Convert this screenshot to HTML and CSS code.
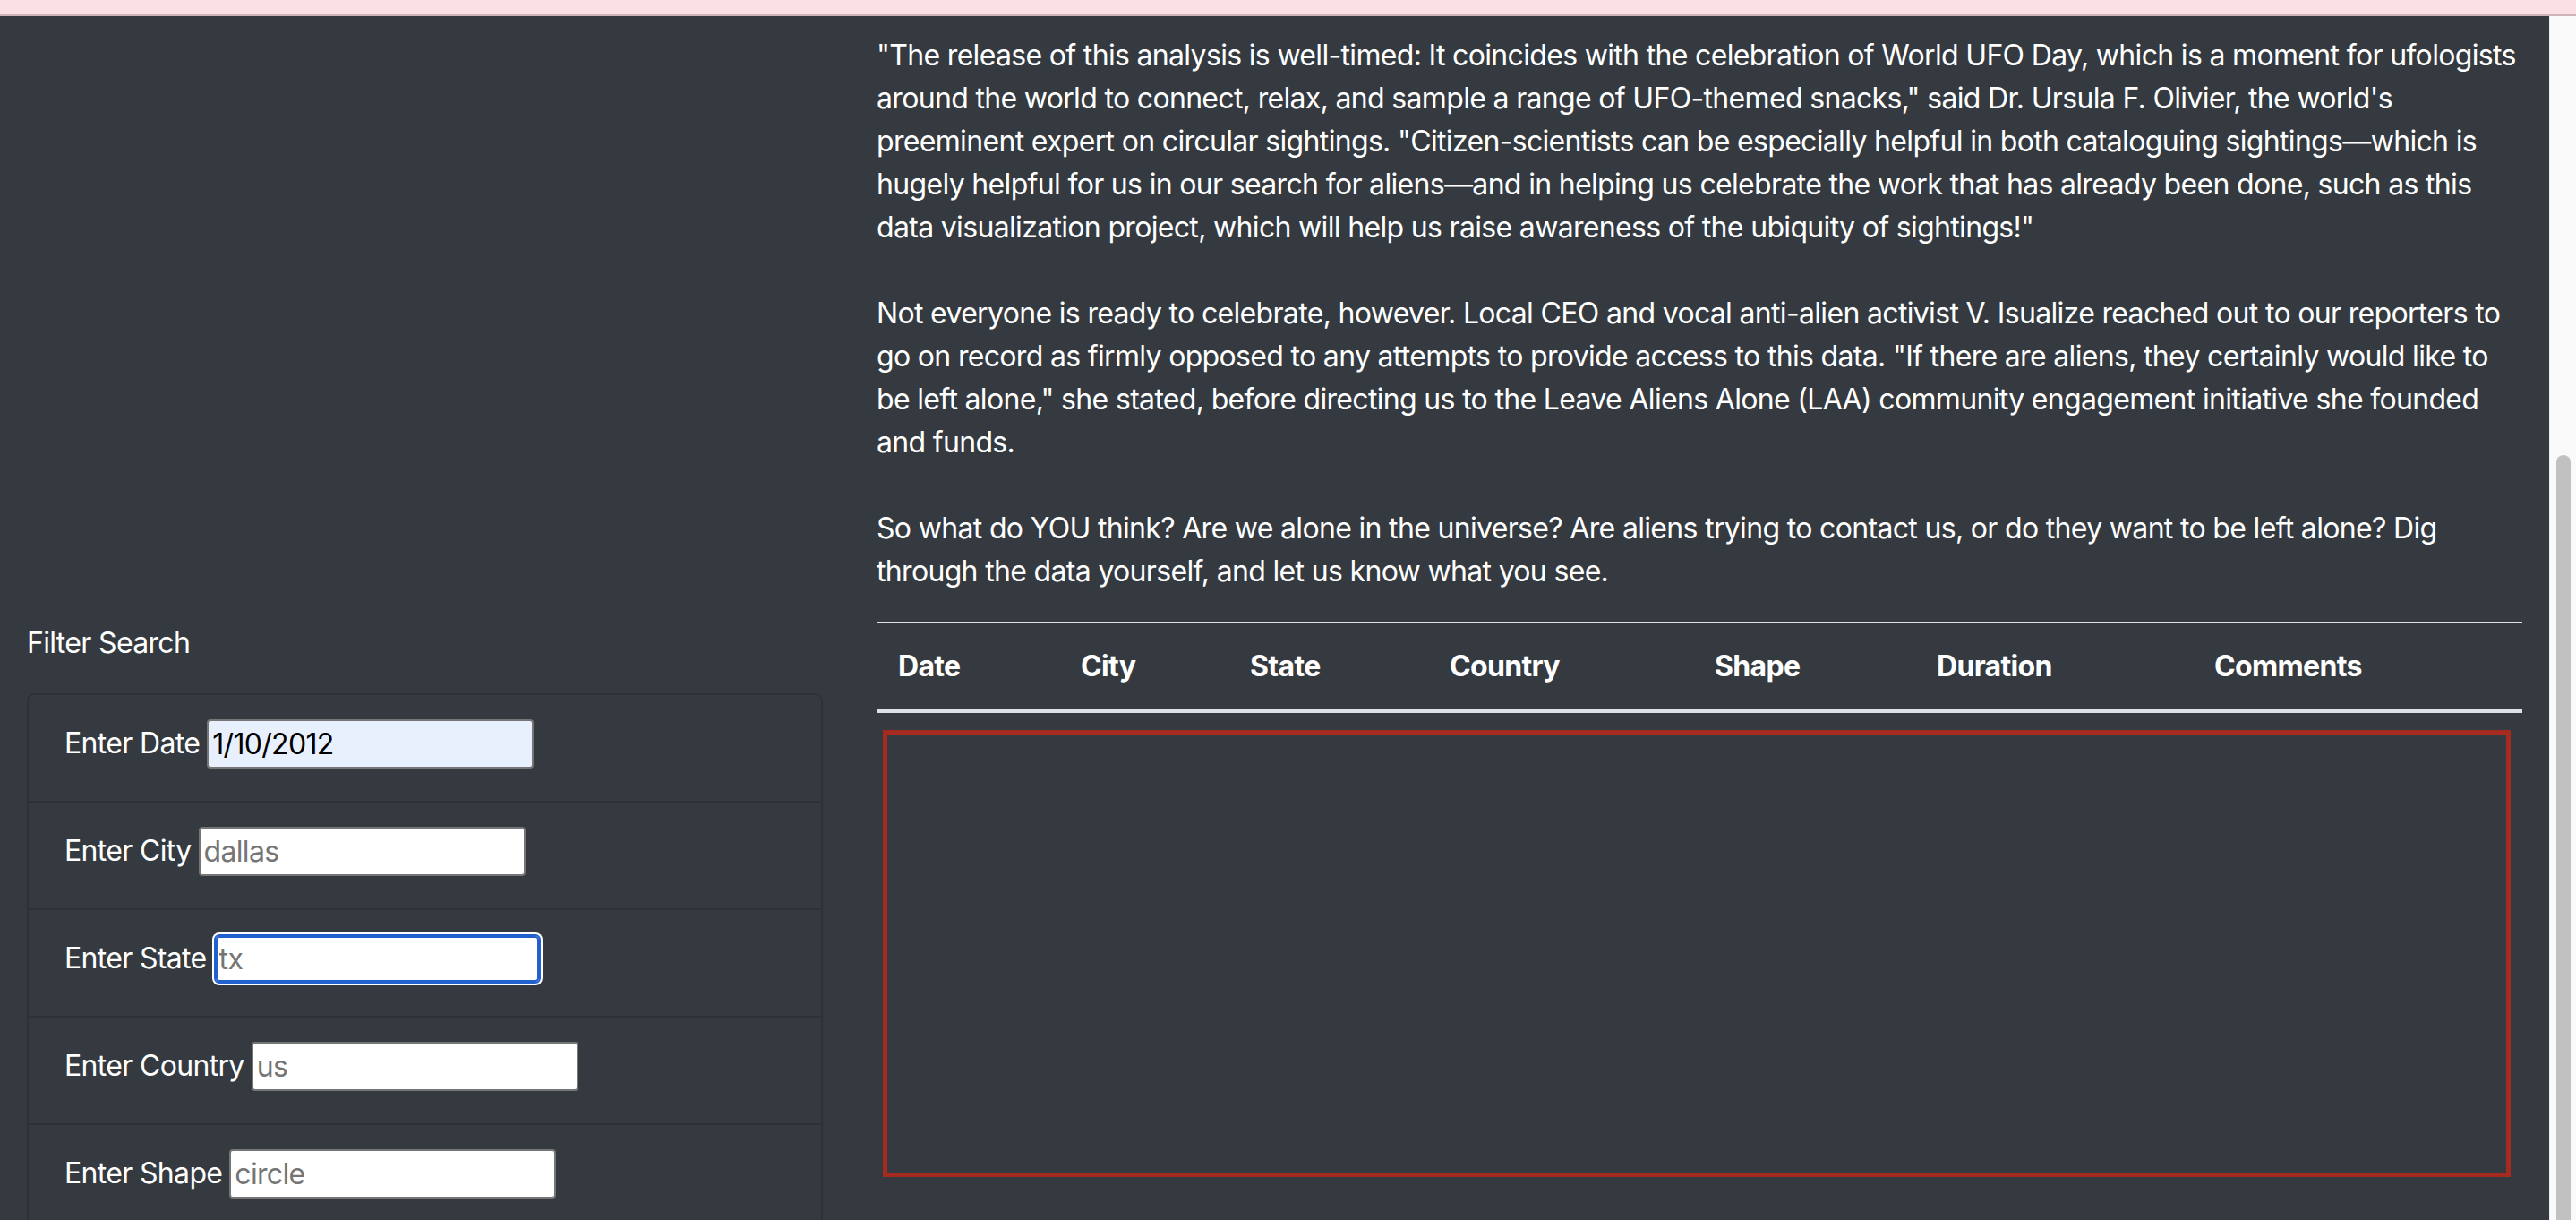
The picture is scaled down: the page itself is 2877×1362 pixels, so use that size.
FILE: index.html
```html
<!DOCTYPE html>
<html lang="en">
<head>
<meta charset="utf-8">
<title>UFO Sightings</title>
<link rel="stylesheet" href="styles.css">
</head>
<body>
<div class="topbar"></div>
<div class="window">
  <main class="page">
    <div class="layout">
      <div class="article">
        <p>"The release of this analysis is well-timed: It coincides with the celebration of World UFO Day, which is a moment for ufologists around the world to connect, relax, and sample a range of UFO-themed snacks," said Dr. Ursula F. Olivier, the world's preeminent expert on circular sightings. "Citizen-scientists can be especially helpful in both cataloguing sightings—which is hugely helpful for us in our search for aliens—and in helping us celebrate the work that has already been done, such as this data visualization project, which will help us raise awareness of the ubiquity of sightings!"</p>
        <p>Not everyone is ready to celebrate, however. Local CEO and vocal anti-alien activist V. Isualize reached out to our reporters to go on record as firmly opposed to any attempts to provide access to this data. "If there are aliens, they certainly would like to be left alone," she stated, before directing us to the Leave Aliens Alone (LAA) community engagement initiative she founded and funds.</p>
        <p class="last">So what do YOU think? Are we alone in the universe? Are aliens trying to contact us, or do they want to be left alone? Dig through the data yourself, and let us know what you see.</p>
      </div>
      <aside class="filters">
        <h5 class="filter-title">Filter Search</h5>
        <ul class="list-group">
          <li class="list-item"><label for="datetime">Enter Date</label><input id="datetime" class="field autofill" type="text" value="1/10/2012"></li>
          <li class="list-item"><label for="city">Enter City</label><input id="city" class="field" type="text" placeholder="dallas"></li>
          <li class="list-item"><label for="state">Enter State</label><input id="state" class="field focused" type="text" placeholder="tx"></li>
          <li class="list-item"><label for="country">Enter Country</label><input id="country" class="field" type="text" placeholder="us"></li>
          <li class="list-item"><label for="shape">Enter Shape</label><input id="shape" class="field" type="text" placeholder="circle"></li>
        </ul>
      </aside>
      <section class="results">
        <table class="ufo-table">
          <thead>
            <tr>
              <th class="c-date">Date</th>
              <th class="c-city">City</th>
              <th class="c-state">State</th>
              <th class="c-country">Country</th>
              <th class="c-shape">Shape</th>
              <th class="c-duration">Duration</th>
              <th class="c-comments">Comments</th>
            </tr>
          </thead>
        </table>
        <div class="table-body"></div>
      </section>
    </div>
  </main>
  <div class="scrollbar"><div class="thumb"></div></div>
</div>
</body>
</html>
```
FILE: styles.css
```css
html, body {
  margin: 0;
  padding: 0;
  height: 100%;
  overflow: hidden;
}
body {
  font-family: "Inter", "Liberation Sans", sans-serif;
  font-size: 32px;
  line-height: 48px;
  letter-spacing: -0.67px;
  color: #ffffff;
  background: #343a40;
}
.topbar {
  height: 16px;
  background: #fbe0e4;
  border-bottom: 2px solid #cdb4b9;
}
.window {
  display: flex;
  height: calc(100vh - 18px);
}
.page {
  flex: 1;
  min-width: 0;
  background: #343a40;
  overflow: hidden;
  padding-top: 20px;
}
.layout {
  display: grid;
  grid-template-columns: 1fr 2fr;
}
.article, .filters, .results {
  padding: 0 30px;
  min-width: 0;
}
.article {
  grid-column: 2;
  grid-row: 1;
}
.article p {
  margin: 0 0 48px;
}
.article p.last {
  margin-bottom: 32px;
}
.filters {
  grid-column: 1;
  grid-row: 2;
}
.results {
  grid-column: 2;
  grid-row: 2;
}
.filter-title {
  margin: 0 0 32px;
  font-size: 32px;
  line-height: 48px;
  font-weight: 400;
}
.list-group {
  list-style: none;
  margin: 0;
  padding: 0;
  border: 2px solid rgba(0, 0, 0, 0.13);
  border-radius: 8px;
}
.list-item {
  display: flex;
  align-items: center;
  gap: 8px;
  height: 70px;
  padding: 19px 40px 29px;
}
.list-item + .list-item {
  border-top: 2px solid rgba(0, 0, 0, 0.13);
}
.list-item label {
  white-space: nowrap;
}
.field {
  box-sizing: border-box;
  width: 365px;
  height: 55px;
  margin: 0;
  padding: 0 4px;
  border: 2px solid #767676;
  border-radius: 4px;
  background: #ffffff;
  color: #000000;
  font-family: inherit;
  font-size: 32px;
  letter-spacing: inherit;
  outline: none;
}
.field::placeholder {
  color: #757575;
}
.field.autofill {
  background: #e8f0fe;
}
.field.focused {
  border-color: #2360cf;
  box-shadow: inset 0 0 0 2px #2360cf, 0 0 0 2px #ffffff;
  border-radius: 6px;
}
.ufo-table {
  width: 100%;
  table-layout: fixed;
  border-collapse: separate;
  border-spacing: 0;
}
.ufo-table th {
  box-sizing: border-box;
  text-align: left;
  font-weight: 700;
  padding: 24px;
  line-height: 48px;
  border-top: 2px solid #dee2e6;
  border-bottom: 4px solid #dee2e6;
  white-space: nowrap;
}
.c-date { width: 204px; }
.c-city { width: 189px; }
.c-state { width: 223px; }
.c-country { width: 296px; }
.c-shape { width: 248px; }
.c-duration { width: 310px; }
.c-comments { width: auto; }
.table-body {
  box-sizing: border-box;
  height: 499px;
  margin: 19px 13px 0 7px;
  border: 5px solid #a52a1f;
}
.scrollbar {
  box-sizing: border-box;
  width: 30px;
  flex: none;
  display: flex;
  flex-direction: column;
  padding: 490px 6px 0 7px;
  background: #fafafa;
  border-left: 1px solid #ececec;
}
.thumb {
  flex: 1;
  background: #c1c1c1;
  border-radius: 8px 8px 0 0;
}
```
